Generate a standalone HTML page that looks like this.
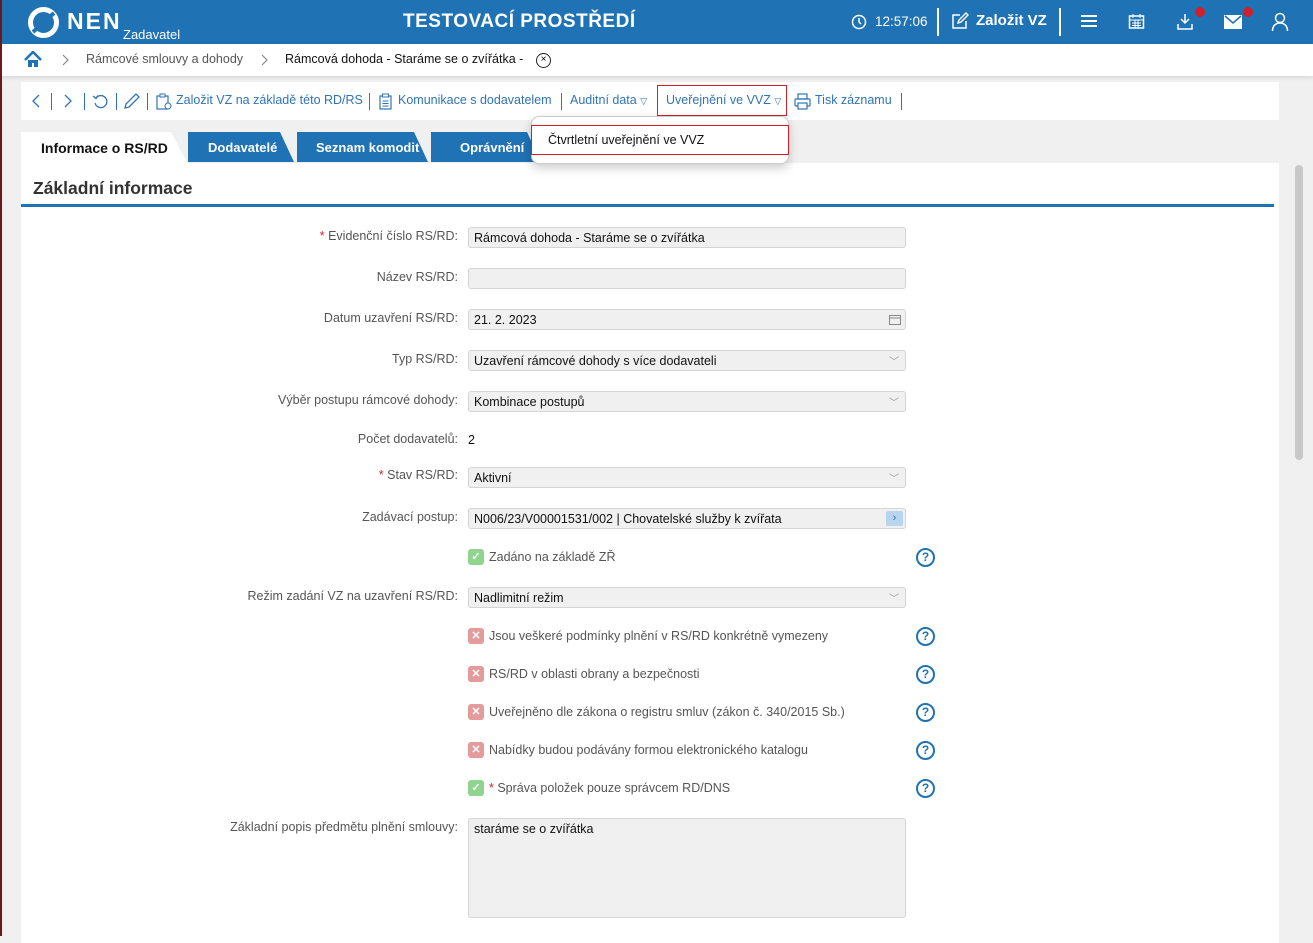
<!DOCTYPE html>
<html><head><meta charset="utf-8"><style>
*{box-sizing:border-box;margin:0;padding:0}
body{width:1313px;height:936px;overflow:hidden;background:#f0f0f0;font-family:"Liberation Sans",sans-serif;position:relative}
.a{position:absolute}
.hdr{left:0;top:0;width:1313px;height:44px;background:#1f72b4;color:#fff}
.bc{left:0;top:44px;width:1313px;height:32px;background:#fff;box-shadow:0 2px 4px rgba(0,0,0,.1);font-size:12.5px}
.tb{left:21px;top:82px;width:1258px;height:38px;background:#fff;font-size:12.5px;color:#2f74b5}
.tb .a{top:11px;white-space:nowrap}
.sep{position:absolute;top:11px;width:1px;height:17px;background:#2f74b5}
.panel{left:21px;top:163px;width:1258px;height:780px;background:#fff}
.lbl{position:absolute;right:855px;font-size:12.5px;color:#555;text-align:right;white-space:nowrap}
.inp{position:absolute;left:468px;width:438px;height:21px;background:#f0f0f0;border:1px solid #d4d4d4;border-radius:3px;font-size:12.5px;color:#111;padding:3px 5px;white-space:nowrap}
.chk{position:absolute;left:468px;font-size:12.5px;color:#555;white-space:nowrap;line-height:16px}
.box{display:inline-block;width:16px;height:16px;border-radius:3px;vertical-align:top;margin-right:5px;color:#fff;text-align:center;font-size:11px;line-height:16px;font-weight:bold}
.ok{background:#8fd48f}.no{background:#e49b9b}
.q{position:absolute;left:916px;width:19px;height:19px;border:2px solid #1f72b4;border-radius:50%;color:#1f72b4;font-size:12px;font-weight:bold;text-align:center;line-height:15px}
.dd{position:absolute;right:6px;top:2px;color:#999;font-size:10px}
.tab{position:absolute;top:132px;height:30px;color:#fff;font-weight:bold;font-size:13px;line-height:32px;background:#1f72b4;white-space:nowrap;clip-path:polygon(0 0,calc(100% - 14px) 0,100% 100%,0 100%)}
</style></head><body>
<div class="a" style="left:0;top:0;width:2px;height:936px;background:#6b1a1a;z-index:5"></div>
<div class="a hdr">
 <svg class="a" style="left:27px;top:6px" width="33" height="33" viewBox="0 0 33 33"><circle cx="16.5" cy="16.5" r="13" fill="none" stroke="#fff" stroke-width="5"/><path d="M6 26 L27 7" stroke="#1f72b4" stroke-width="4"/></svg>
 <div class="a" style="left:67px;top:8px;font-size:23px;font-weight:bold;letter-spacing:2px">NEN</div>
 <div class="a" style="left:123px;top:27px;font-size:13px">Zadavatel</div>
 <div class="a" style="left:403px;top:11px;font-size:19px;font-weight:bold;letter-spacing:.5px">TESTOVACÍ PROSTŘEDÍ</div>
 <svg class="a" style="left:851px;top:14px" width="16" height="16"><circle cx="8" cy="8" r="6.5" fill="none" stroke="#fff" stroke-width="1.5"/><path d="M8 4v4l2 2" stroke="#fff" stroke-width="1.5" fill="none"/></svg>
 <div class="a" style="left:875px;top:14px;font-size:13.5px">12:57:06</div>
 <div class="a" style="left:937px;top:8px;width:2px;height:28px;background:#fff"></div>
 <svg class="a" style="left:951px;top:12px" width="18" height="18"><path d="M9 3H2v13h13V9" fill="none" stroke="#fff" stroke-width="1.5"/><path d="M7 11l1-3 7-7 2 2-7 7z" fill="none" stroke="#fff" stroke-width="1.4"/></svg>
 <div class="a" style="left:976px;top:12px;font-size:15px;font-weight:bold">Založit VZ</div>
 <div class="a" style="left:1059px;top:8px;width:2px;height:28px;background:#fff"></div>
 <div class="a" style="left:1081px;top:15px;width:16px;height:2px;background:#fff;box-shadow:0 5px 0 #fff,0 10px 0 #fff"></div>
 <svg class="a" style="left:1128px;top:13px" width="17" height="17"><rect x="1.5" y="3" width="14" height="12" fill="none" stroke="#fff" stroke-width="1.5"/><path d="M5 1v4M12 1v4M2 7h13M4 10h9M4 12.5h9M7 7v8M10 7v8" stroke="#fff" stroke-width="1"/></svg>
 <svg class="a" style="left:1176px;top:13px" width="18" height="18"><path d="M9 1v9M5 6l4 4 4-4M2 11v5h14v-5" fill="none" stroke="#fff" stroke-width="1.5"/></svg>
 <div class="a" style="left:1195px;top:7px;width:10px;height:10px;border-radius:50%;background:#d0202a"></div>
 <svg class="a" style="left:1224px;top:15px" width="18" height="14"><rect width="18" height="14" fill="#fff"/><path d="M1 1l8 7 8-7" stroke="#1f72b4" stroke-width="1.5" fill="none"/></svg>
 <div class="a" style="left:1243px;top:7px;width:10px;height:10px;border-radius:50%;background:#d0202a"></div>
 <svg class="a" style="left:1271px;top:12px" width="18" height="19"><circle cx="9" cy="6" r="4.5" fill="none" stroke="#fff" stroke-width="1.5"/><path d="M1.5 19c0-5 3-8 7.5-8s7.5 3 7.5 8" fill="none" stroke="#fff" stroke-width="1.5"/></svg>
</div>
<div class="a bc">
 <svg class="a" style="left:24px;top:7px" width="18" height="17"><path d="M1 9L9 1l8 8" fill="none" stroke="#1f72b4" stroke-width="2.5"/><path d="M4 9v7h4v-4h2v4h4V9" fill="#1f72b4"/></svg>
 <svg class="a" style="left:62px;top:10px" width="8" height="12"><path d="M1 1l5 5-5 5" fill="none" stroke="#888" stroke-width="1.2"/></svg>
 <div class="a" style="left:86px;top:8px;color:#555">Rámcové smlouvy a dohody</div>
 <svg class="a" style="left:261px;top:10px" width="8" height="12"><path d="M1 1l5 5-5 5" fill="none" stroke="#888" stroke-width="1.2"/></svg>
 <div class="a" style="left:285px;top:8px;color:#111">Rámcová dohoda - Staráme se o zvířátka -</div>
 <div class="a" style="left:536px;top:9px;width:15px;height:15px;border:1.3px solid #222;border-radius:50%;font-size:10px;text-align:center;line-height:12px">×</div>
</div>
<div class="a tb">
 <svg class="a" style="left:11px;top:12px" width="8" height="14"><path d="M7 1L1 7l6 6" fill="none" stroke="#2f74b5" stroke-width="1.3"/></svg>
 <div class="sep" style="left:30px"></div>
 <svg class="a" style="left:43px;top:12px" width="8" height="14"><path d="M1 1l6 6-6 6" fill="none" stroke="#2f74b5" stroke-width="1.3"/></svg>
 <div class="sep" style="left:63px"></div>
 <svg class="a" style="left:71px;top:11px" width="17" height="17"><path d="M4 5A6 6 0 1 1 3 10" fill="none" stroke="#2f74b5" stroke-width="1.3"/><path d="M1 3l3 2.5 2-3" fill="none" stroke="#2f74b5" stroke-width="1.3"/></svg>
 <div class="sep" style="left:95px"></div>
 <svg class="a" style="left:102px;top:10px" width="17" height="18"><path d="M2 16l1-4L13 2l3 3L6 15z" fill="none" stroke="#2f74b5" stroke-width="1.3"/></svg>
 <div class="sep" style="left:126px"></div>
 <svg class="a" style="left:135px;top:11px" width="17" height="18"><rect x="1" y="3" width="11" height="13" fill="none" stroke="#2f74b5" stroke-width="1.2"/><rect x="4" y="1" width="5" height="3" fill="#fff" stroke="#2f74b5"/><circle cx="12" cy="13" r="3" fill="#fff" stroke="#2f74b5"/></svg>
 <div class="a" style="left:155px">Založit VZ na základě této RD/RS</div>
 <div class="sep" style="left:348px"></div>
 <svg class="a" style="left:358px;top:11px" width="13" height="17"><rect x="1" y="3" width="11" height="13" fill="none" stroke="#2f74b5" stroke-width="1.2"/><rect x="3.5" y="1" width="6" height="3" fill="#fff" stroke="#2f74b5"/><path d="M3.5 8h6M3.5 10.5h6M3.5 13h6" stroke="#2f74b5"/></svg>
 <div class="a" style="left:377px">Komunikace s dodavatelem</div>
 <div class="sep" style="left:540px"></div>
 <div class="a" style="left:549px">Auditní data <span style="font-size:9px">▽</span></div>
 <div class="a" style="left:636px;top:3px;width:130px;height:31px;border:1px solid #d0202a"></div>
 <div class="a" style="left:645px">Uveřejnění ve VVZ <span style="font-size:9px">▽</span></div>
 <svg class="a" style="left:773px;top:11px" width="17" height="17"><rect x="4" y="1" width="9" height="5" fill="none" stroke="#2f74b5" stroke-width="1.2"/><rect x="1" y="6" width="15" height="7" rx="1" fill="none" stroke="#2f74b5" stroke-width="1.2"/><rect x="4" y="10" width="9" height="6" fill="#fff" stroke="#2f74b5" stroke-width="1.2"/></svg>
 <div class="a" style="left:794px">Tisk záznamu</div>
 <div class="sep" style="left:880px"></div>
</div>
<div class="a" style="left:21px;top:132px;width:166px;height:31px;background:#fff;clip-path:polygon(0 0,150px 0,166px 31px,0 31px)"></div>
<div class="a" style="left:41px;top:140px;font-size:14px;font-weight:bold;color:#111">Informace o RS/RD</div>
<div class="tab" style="left:188px;width:106px;padding-left:20px">Dodavatelé</div>
<div class="tab" style="left:297px;width:131px;padding-left:19px">Seznam komodit</div>
<div class="tab" style="left:431px;width:110px;padding-left:29px">Oprávnění</div>
<div class="a panel">
 <div class="a" style="left:12px;top:15px;font-size:17.5px;font-weight:bold;color:#333">Základní informace</div>
 <div class="a" style="left:0;top:41px;width:1253px;height:3px;background:#1f72b4"></div>
</div>
<div class="a" style="left:1295px;top:165px;width:8px;height:295px;background:#c8c8c8;border-radius:4px"></div>
<div class="a" style="left:531px;top:116px;width:258px;height:48px;background:#fff;border:1px solid #ccc;border-radius:8px;box-shadow:0 4px 10px rgba(0,0,0,.2)"></div>
<div class="a" style="left:531px;top:125px;width:258px;height:30px;border:1px solid #d0202a;font-size:12.5px;color:#111;padding:7px 16px">Čtvrtletní uveřejnění ve VVZ</div>

<div class="lbl" style="top:229px"><span style="color:#d0202a">*</span> Evidenční číslo RS/RD:</div>
<div class="inp" style="top:227px">Rámcová dohoda - Staráme se o zvířátka</div>
<div class="lbl" style="top:270px">Název RS/RD:</div>
<div class="inp" style="top:268px"></div>
<div class="lbl" style="top:311px">Datum uzavření RS/RD:</div>
<div class="inp" style="top:309px">21. 2. 2023<svg class="a" style="right:4px;top:4px" width="12" height="11"><rect x="0.5" y="1.5" width="11" height="9" fill="none" stroke="#888"/><path d="M0 4h12" stroke="#888"/></svg></div>
<div class="lbl" style="top:352px">Typ RS/RD:</div>
<div class="inp" style="top:350px">Uzavření rámcové dohody s více dodavateli<span class="dd">﹀</span></div>
<div class="lbl" style="top:393px">Výběr postupu rámcové dohody:</div>
<div class="inp" style="top:391px">Kombinace postupů<span class="dd">﹀</span></div>
<div class="lbl" style="top:432px">Počet dodavatelů:</div>
<div class="chk" style="top:432px;color:#111">2</div>
<div class="lbl" style="top:468px"><span style="color:#d0202a">*</span> Stav RS/RD:</div>
<div class="inp" style="top:467px">Aktivní<span class="dd">﹀</span></div>
<div class="lbl" style="top:510px">Zadávací postup:</div>
<div class="inp" style="top:508px">N006/23/V00001531/002 | Chovatelské služby k zvířata<span class="a" style="right:2px;top:2px;width:17px;height:15px;background:#b9d4ef;border-radius:2px;color:#1f72b4;font-size:11px;text-align:center;line-height:15px">›</span></div>
<div class="chk" style="top:549px"><span class="box ok">✓</span>Zadáno na základě ZŘ</div><div class="q" style="top:548px">?</div>
<div class="lbl" style="top:589px">Režim zadání VZ na uzavření RS/RD:</div>
<div class="inp" style="top:587px">Nadlimitní režim<span class="dd">﹀</span></div>
<div class="chk" style="top:628px"><span class="box no">✕</span>Jsou veškeré podmínky plnění v RS/RD konkrétně vymezeny</div><div class="q" style="top:627px">?</div>
<div class="chk" style="top:666px"><span class="box no">✕</span>RS/RD v oblasti obrany a bezpečnosti</div><div class="q" style="top:665px">?</div>
<div class="chk" style="top:704px"><span class="box no">✕</span>Uveřejněno dle zákona o registru smluv (zákon č. 340/2015 Sb.)</div><div class="q" style="top:703px">?</div>
<div class="chk" style="top:742px"><span class="box no">✕</span>Nabídky budou podávány formou elektronického katalogu</div><div class="q" style="top:741px">?</div>
<div class="chk" style="top:780px"><span class="box ok">✓</span><span style="color:#d0202a">*</span> Správa položek pouze správcem RD/DNS</div><div class="q" style="top:779px">?</div>
<div class="lbl" style="top:820px">Základní popis předmětu plnění smlouvy:</div>
<div class="inp" style="top:818px;height:100px">staráme se o zvířátka</div>
</body></html>
